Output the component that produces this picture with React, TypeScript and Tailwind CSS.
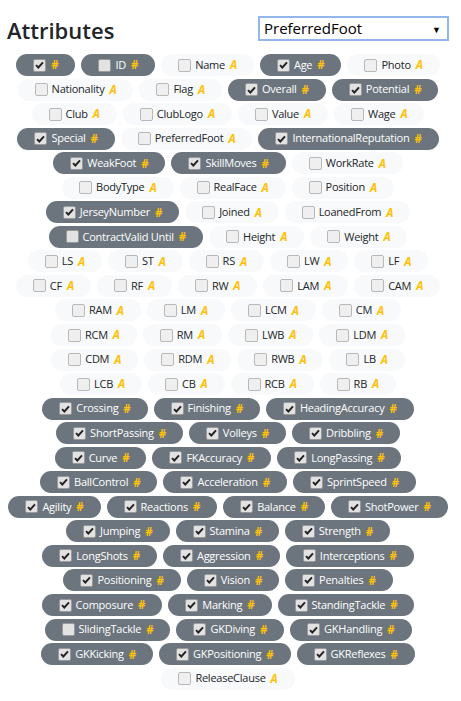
import React from 'react';

type Col = { name: string; type: '#' | 'A'; checked?: boolean };

const num = (name: string, checked = true): Col => ({ name, type: '#', checked });
const txt = (name: string): Col => ({ name, type: 'A' });

const rows: Col[][] = [
  [num(''), num('ID', false), txt('Name'), num('Age'), txt('Photo')],
  [txt('Nationality'), txt('Flag'), num('Overall'), num('Potential')],
  [txt('Club'), txt('ClubLogo'), txt('Value'), txt('Wage')],
  [num('Special'), txt('PreferredFoot'), num('InternationalReputation')],
  [num('WeakFoot'), num('SkillMoves'), txt('WorkRate')],
  [txt('BodyType'), txt('RealFace'), txt('Position')],
  [num('JerseyNumber'), txt('Joined'), txt('LoanedFrom')],
  [num('ContractValid Until', false), txt('Height'), txt('Weight')],
  ['LS', 'ST', 'RS', 'LW', 'LF'].map(txt),
  ['CF', 'RF', 'RW', 'LAM', 'CAM'].map(txt),
  ['RAM', 'LM', 'LCM', 'CM'].map(txt),
  ['RCM', 'RM', 'LWB', 'LDM'].map(txt),
  ['CDM', 'RDM', 'RWB', 'LB'].map(txt),
  ['LCB', 'CB', 'RCB', 'RB'].map(txt),
  [num('Crossing'), num('Finishing'), num('HeadingAccuracy')],
  [num('ShortPassing'), num('Volleys'), num('Dribbling')],
  [num('Curve'), num('FKAccuracy'), num('LongPassing')],
  [num('BallControl'), num('Acceleration'), num('SprintSpeed')],
  [num('Agility'), num('Reactions'), num('Balance'), num('ShotPower')],
  [num('Jumping'), num('Stamina'), num('Strength')],
  [num('LongShots'), num('Aggression'), num('Interceptions')],
  [num('Positioning'), num('Vision'), num('Penalties')],
  [num('Composure'), num('Marking'), num('StandingTackle')],
  [num('SlidingTackle', false), num('GKDiving'), num('GKHandling')],
  [num('GKKicking'), num('GKPositioning'), num('GKReflexes')],
  [txt('ReleaseClause')],
];

const CheckBox = ({ checked, dark }: { checked?: boolean; dark: boolean }) => (
  <span
    className={`flex h-[13px] w-[13px] shrink-0 items-center justify-center rounded-[2px] border ${
      dark ? 'border-[#9a9a9a] bg-[#e2e2e2]' : 'border-[#b8b8b8] bg-[#efefef]'
    }`}
  >
    {checked && (
      <svg width="9" height="8" viewBox="0 0 9 8">
        <path d="M1 4.2 L3.3 6.5 L8 1.3" fill="none" stroke="#222" strokeWidth="1.9" />
      </svg>
    )}
  </span>
);

const Chip = ({ col }: { col: Col }) => {
  const dark = col.type === '#';
  return (
    <div
      className={`flex h-[22px] items-center rounded-full px-[17px] text-[11px] tracking-[-0.25px] ${
        dark ? 'bg-[#6c757d] text-white' : 'bg-[#f8f9fa] text-[#212529]'
      }`}
    >
      <CheckBox checked={col.checked} dark={dark} />
      {col.name && <span className="ml-[4px]">{col.name}</span>}
      <span className={`ml-[5px] text-[11.5px] font-bold text-[#ffc107] ${col.type === 'A' ? 'italic' : ''}`}>{col.type}</span>
    </div>
  );
};

export default function App() {
  return (
    <div className="min-h-screen bg-white pl-[7px] pr-[12px] pt-[15px]" style={{ fontFamily: '"Open Sans", sans-serif' }}>
      <div className="flex items-center justify-between">
        <h3 className="mt-[4px] text-[22px] font-semibold leading-none text-[#212529]">Attributes</h3>
        <div className="relative flex h-[25px] w-[191px] items-center border-2 border-[#93b6ec] bg-white pl-[4px] text-[15px] text-black">
          PreferredFoot
          <span className="absolute right-[6px] top-[5px] text-[9px]">▼</span>
        </div>
      </div>
      <div className="mt-[13px] flex flex-col gap-y-[2.55px]">
        {rows.map((row, i) => (
          <div key={i} className="flex justify-center gap-x-[6px]">
            {row.map(col => (
              <Chip key={col.name || 'idx'} col={col} />
            ))}
          </div>
        ))}
      </div>
    </div>
  );
}
